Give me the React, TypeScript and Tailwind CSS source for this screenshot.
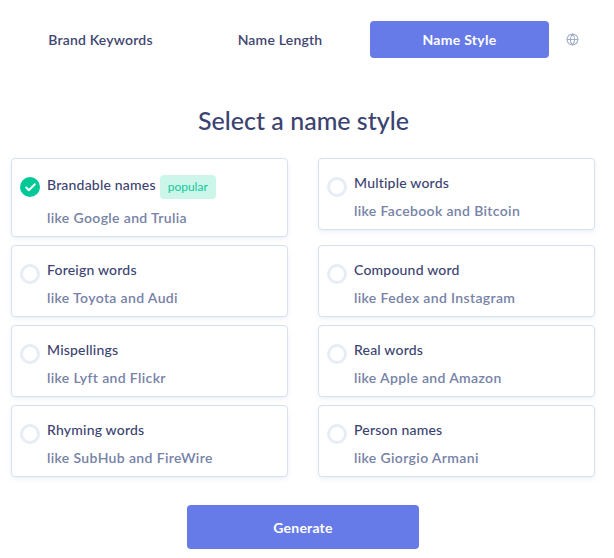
import React from 'react';
import { Check, Globe } from 'lucide-react';

const leftStyles = [
  { name: 'Brandable names', hint: 'like Google and Trulia', popular: true, selected: true },
  { name: 'Foreign words', hint: 'like Toyota and Audi' },
  { name: 'Mispellings', hint: 'like Lyft and Flickr' },
  { name: 'Rhyming words', hint: 'like SubHub and FireWire' },
];

const rightStyles = [
  { name: 'Multiple words', hint: 'like Facebook and Bitcoin' },
  { name: 'Compound word', hint: 'like Fedex and Instagram' },
  { name: 'Real words', hint: 'like Apple and Amazon' },
  { name: 'Person names', hint: 'like Giorgio Armani' },
];

type StyleOption = { name: string; hint: string; popular?: boolean; selected?: boolean };

const StyleCard: React.FC<{ option: StyleOption }> = ({ option }) => (
  <div className="flex gap-[7px] pl-2 pt-[13px] pb-[8px] bg-white border border-[#d5e1ee] rounded-[4px] shadow-[0_2px_4px_rgba(180,200,225,0.25)]">
    {option.selected ? (
      <div className="mt-[5px] w-5 h-5 shrink-0 rounded-full bg-[#00c896] flex items-center justify-center">
        <Check size={13} strokeWidth={3.5} className="text-white" />
      </div>
    ) : (
      <div className="mt-[5px] w-5 h-5 shrink-0 rounded-full border-[3px] border-[#e6edf7]" />
    )}
    <div className="min-w-0">
      <div className="flex items-start gap-[4px]">
        <span className={`text-[14px] leading-[21px] font-medium tracking-[0.2px] text-[#3b4371] ${option.popular ? 'mt-[2px]' : ''}`}>{option.name}</span>
        {option.popular && (
          <span className="h-6 w-14 mt-[3px] flex items-center justify-center rounded-[4px] bg-[#ccf6ea] text-[#10c99b] text-[12px]">popular</span>
        )}
      </div>
      <p className={`text-[14px] leading-[21px] font-semibold tracking-[0.36px] text-[#7682a6] ${option.popular ? 'mt-[8px]' : 'mt-[7px]'}`}>{option.hint}</p>
    </div>
  </div>
);

export default function App() {
  return (
    <div className="w-[614px] h-[558px] bg-white overflow-hidden font-['Lato',sans-serif]">
      <div className="flex items-center pl-[11px] pt-[21px]">
        <button className="w-[179px] h-[37px] text-[14px] font-semibold tracking-[0.2px] text-[#3f4670]">Brand Keywords</button>
        <button className="w-[180px] h-[37px] text-[14px] font-semibold tracking-[0.2px] text-[#3f4670]">Name Length</button>
        <button className="w-[179px] h-[37px] rounded-[4px] bg-[#667ae8] text-[14px] font-bold tracking-[0.3px] text-white">Name Style</button>
        <Globe size={13} strokeWidth={2} className="ml-[17px] text-[#a3aec6]" />
      </div>
      <h1 className="mt-[46px] text-center pr-[7px] text-[25px] leading-[32px] font-medium text-[#3b4371]">Select a name style</h1>
      <div className="mt-[22px] pl-[11px] pr-[19px] grid grid-cols-2 gap-x-[30px] gap-y-[8px] items-start">
        {leftStyles.map((option, i) => (
          <React.Fragment key={option.name}>
            <StyleCard option={option} />
            <StyleCard option={rightStyles[i]} />
          </React.Fragment>
        ))}
      </div>
      <div className="mt-[28px] flex justify-center pr-[8px]">
        <button className="w-[232px] h-[44px] rounded-[4px] bg-[#667ae8] text-white text-[14px] font-bold tracking-[0.2px]">Generate</button>
      </div>
    </div>
  );
}
